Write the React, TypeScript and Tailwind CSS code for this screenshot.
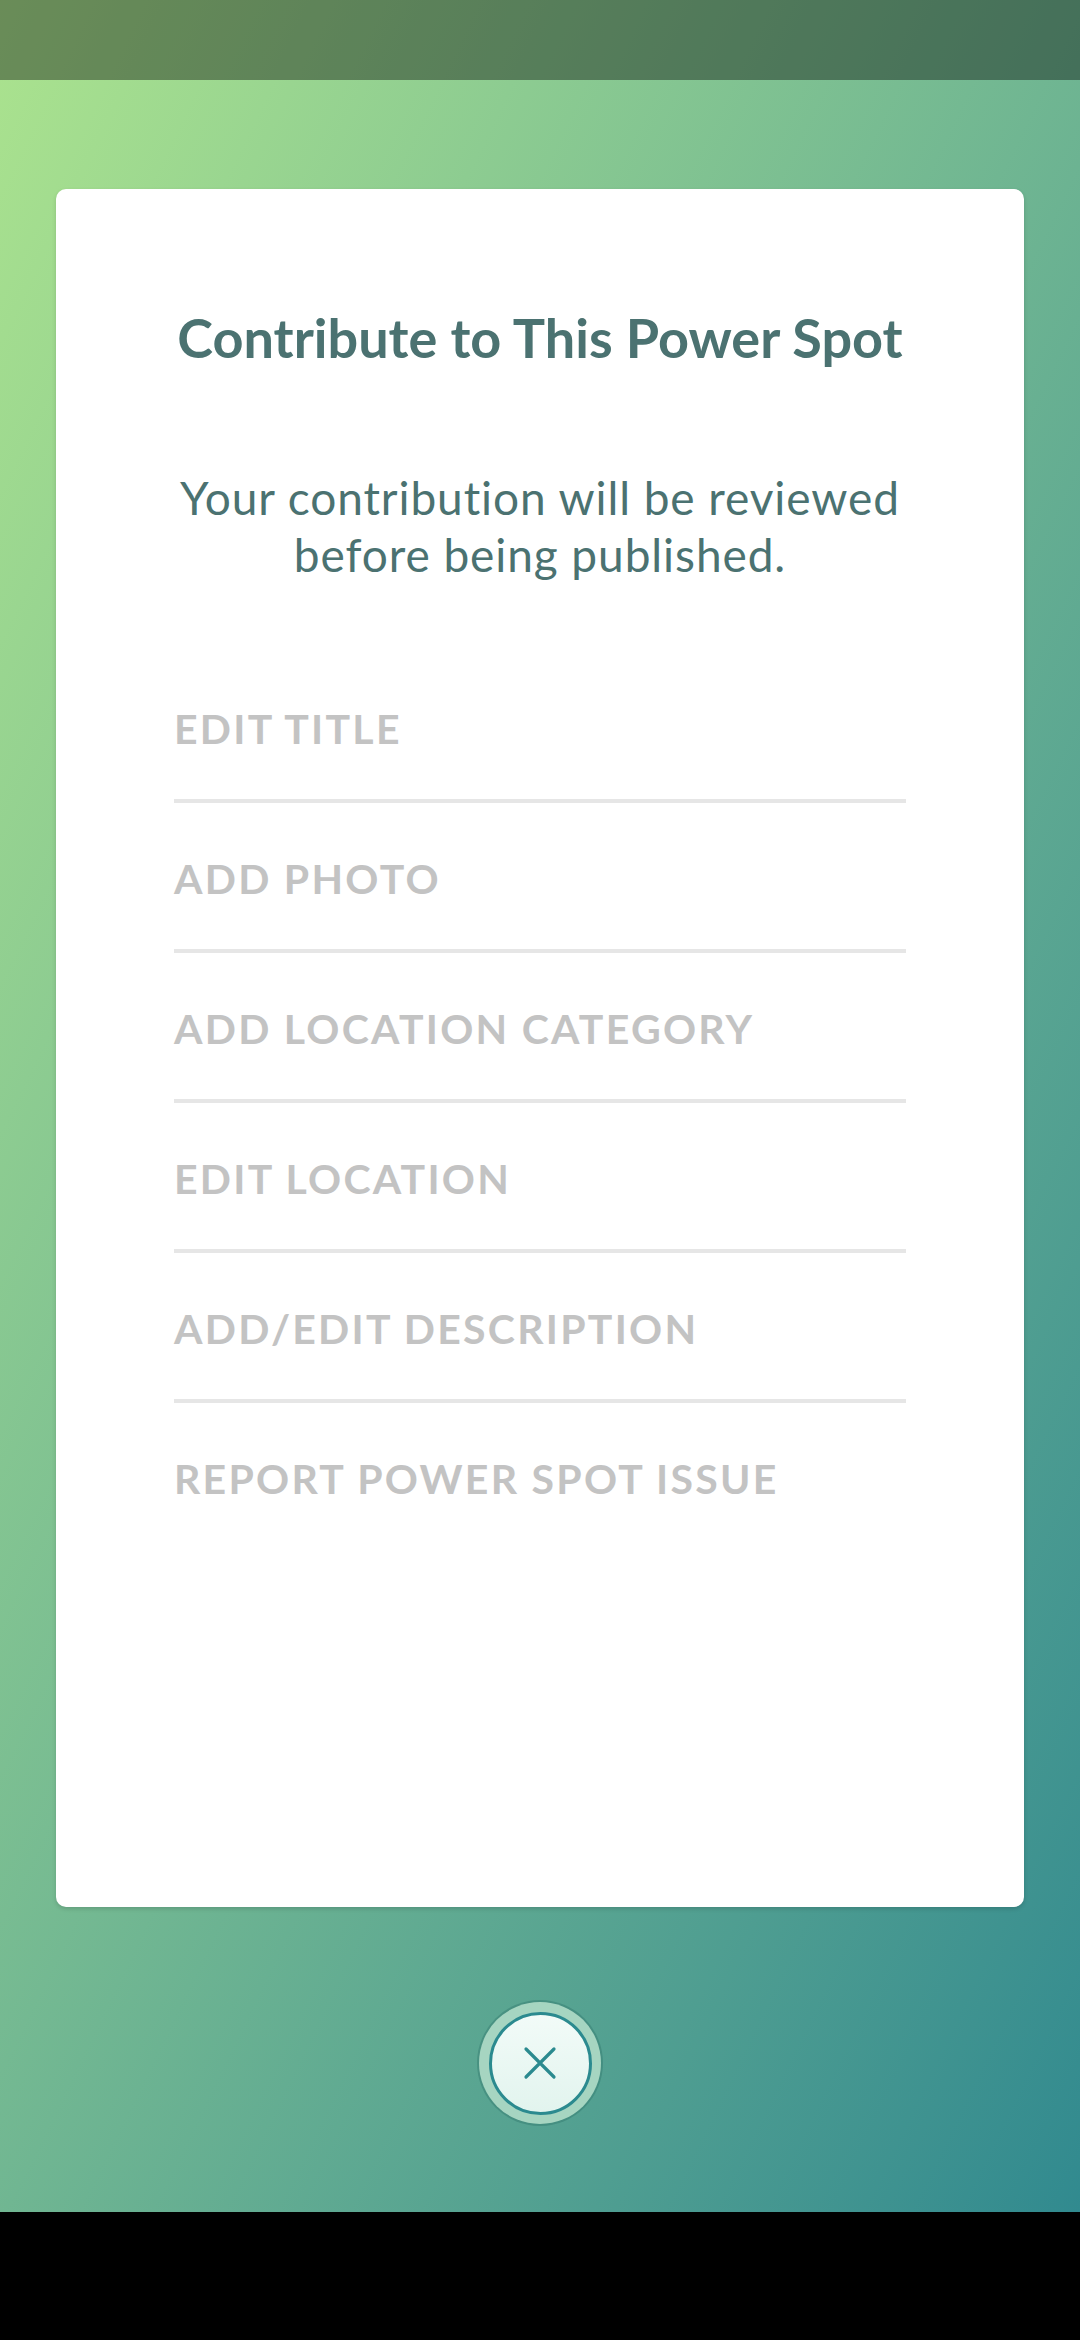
import React from "react";

const items = [
  "EDIT TITLE",
  "ADD PHOTO",
  "ADD LOCATION CATEGORY",
  "EDIT LOCATION",
  "ADD/EDIT DESCRIPTION",
  "REPORT POWER SPOT ISSUE",
];

export default function App() {
  return (
    <div
      className="w-[1080px] h-[2340px] flex flex-col bg-black [font-variant-ligatures:none]"
      style={{ fontFamily: "Lato, 'Noto Sans', sans-serif" }}
    >
      <div className="h-[2212px] flex flex-col items-center bg-linear-to-br from-[#abe38e] to-[#318a8f]">
        <div className="h-[80px] w-full bg-black/[0.38]" />
        <div className="mt-[109px] w-[968px] h-[1718px] bg-white rounded-[10px] shadow-[0_2px_4px_rgba(0,0,0,0.15)] flex flex-col items-center">
          <h1 className="mt-[119px] text-[54px] leading-[60px] font-bold text-[#4b7271] text-center">
            Contribute to This Power Spot
          </h1>
          <p className="mt-[101px] text-[46px] leading-[57px] tracking-[0.02em] text-[#4b7271] text-center">
            Your contribution will be reviewed
            <br />
            before being published.
          </p>
          <div className="mt-[70px] w-[732px] flex flex-col">
            {items.map((t, i) => (
              <div key={t} className="flex flex-col">
                <div className="h-[146px] pt-[4px] flex items-center text-[41px] leading-none font-bold tracking-[0.055em] text-[#c3c3c3]">
                  {t}
                </div>
                {i < items.length - 1 && <div className="h-[4px] bg-[#e6e6e6]" />}
              </div>
            ))}
          </div>
        </div>
        <div className="mt-[95px] w-[122px] h-[122px] rounded-full bg-[#a6d5c1] shadow-[0_0_0_2px_rgba(40,110,100,0.35)] flex items-center justify-center">
          <div className="w-[103px] h-[103px] rounded-full border-[3px] border-[#2b8a8f] bg-linear-to-b from-[#f2fbf8] to-[#e2f4ee] flex items-center justify-center">
            <svg width="34" height="34" viewBox="0 0 34 34" fill="none">
              <path d="M3 3 L31 31 M31 3 L3 31" stroke="#2b8a8f" strokeWidth="3.2" strokeLinecap="round" />
            </svg>
          </div>
        </div>
      </div>
    </div>
  );
}
